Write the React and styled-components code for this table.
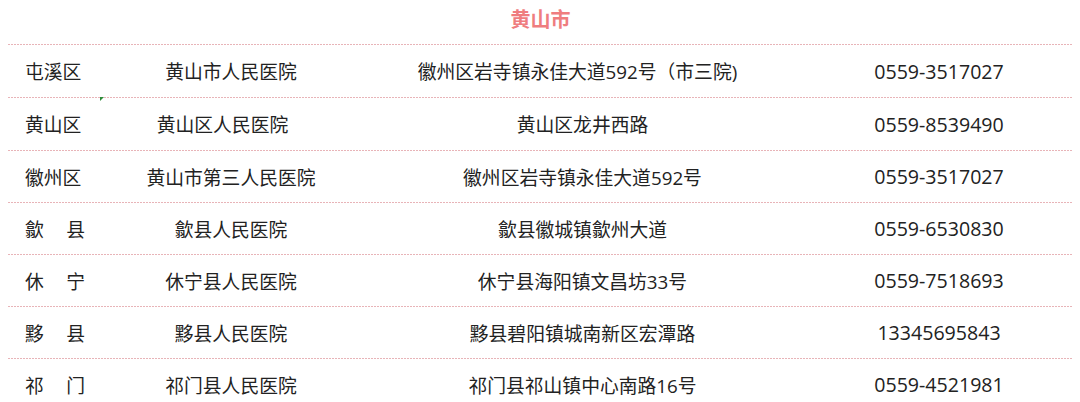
import React from "react";
import styled, { createGlobalStyle } from "styled-components";

const Global = createGlobalStyle`
  html, body { margin: 0; padding: 0; background: #fff; }
  body { font-family: "Open Sans", "Noto Sans CJK SC", sans-serif; }
`;

const Page = styled.div`
  width: 1080px;
  height: 402px;
  overflow: hidden;
  box-sizing: border-box;
  padding: 0 7px 0 8px;
  background: #fff;
`;

const Title = styled.h1`
  margin: 0;
  height: 44px;
  line-height: 38px;
  text-align: center;
  font-family: "Noto Sans CJK SC", sans-serif;
  font-size: 20px;
  font-weight: 700;
  color: #ef7d7f;
`;

const Row = styled.div`
  position: relative;
  display: grid;
  grid-template-columns: 112px 222px 481px 232px 1fr;
  align-items: center;
  height: ${(p) => p.$h}px;
  background-image: repeating-linear-gradient(
    to right,
    #e8b4b8 0 2px,
    transparent 2px 3px
  );
  background-size: 100% 1px;
  background-repeat: no-repeat;
  background-position: 0 0;
  font-family: "Open Sans", "Noto Sans CJK SC", sans-serif;
  font-size: 18.8px;
  color: #222;
`;

const Cell = styled.div`
  text-align: center;
  white-space: nowrap;
  padding-top: 1px;
  padding-right: ${(p) => p.$shift || 0}px;
`;

const Phone = styled.div`
  text-align: center;
  white-space: nowrap;
  padding-top: 1px;
  font-size: 19.6px;
`;

const NameCell = styled.div`
  padding-left: 17px;
  padding-top: 1px;
  white-space: nowrap;
`;

const Spread = styled.span`
  display: inline-flex;
  justify-content: space-between;
  width: 60px;
`;

const Marker = styled.span`
  position: absolute;
  left: 92px;
  top: 0;
  width: 0;
  height: 0;
  border-top: 4px solid #2e8b3a;
  border-right: 4px solid transparent;
`;

const rows = [
  { h: 53, area: "屯溪区", hosp: "黄山市人民医院", addr: "徽州区岩寺镇永佳大道592号（市三院)", tel: "0559-3517027", addrShift: 10 },
  { h: 53, area: "黄山区", hosp: "黄山区人民医院", addr: "黄山区龙井西路", tel: "0559-8539490", hospShift: 17, marker: true },
  { h: 52, area: "徽州区", hosp: "黄山市第三人民医院", addr: "徽州区岩寺镇永佳大道592号", tel: "0559-3517027" },
  { h: 52, area: ["歙", "县"], hosp: "歙县人民医院", addr: "歙县徽城镇歙州大道", tel: "0559-6530830" },
  { h: 52, area: ["休", "宁"], hosp: "休宁县人民医院", addr: "休宁县海阳镇文昌坊33号", tel: "0559-7518693" },
  { h: 52, area: ["黟", "县"], hosp: "黟县人民医院", addr: "黟县碧阳镇城南新区宏潭路", tel: "13345695843" },
  { h: 52, area: ["祁", "门"], hosp: "祁门县人民医院", addr: "祁门县祁山镇中心南路16号", tel: "0559-4521981" },
];

export default function App() {
  return (
    <Page>
      <Global />
      <Title>黄山市</Title>
      {rows.map((r, i) => (
        <Row key={i} $h={r.h}>
          {r.marker && <Marker />}
          <NameCell>
            {Array.isArray(r.area) ? (
              <Spread>
                <span>{r.area[0]}</span>
                <span>{r.area[1]}</span>
              </Spread>
            ) : (
              r.area
            )}
          </NameCell>
          <Cell $shift={r.hospShift}>{r.hosp}</Cell>
          <Cell $shift={r.addrShift}>{r.addr}</Cell>
          <Phone>{r.tel}</Phone>
          <div />
        </Row>
      ))}
    </Page>
  );
}
